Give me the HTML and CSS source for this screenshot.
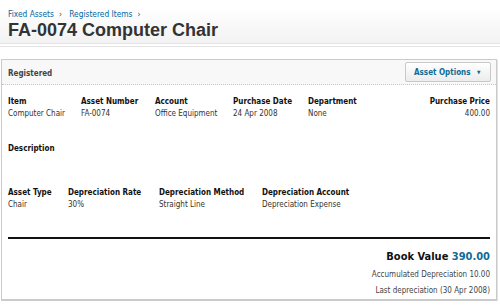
FILE: index.html
```html
<!DOCTYPE html>
<html lang="en">
<head>
    <meta charset="UTF-8">
    <title>FA-0074 Computer Chair</title>
    <link rel="stylesheet" href="styles.css">
</head>
<body>
    <div class="page-header">
        <div class="breadcrumb">
            <a href="#">Fixed Assets</a><span class="sep">&rsaquo;</span>
            <a href="#">Registered Items</a><span class="sep">&rsaquo;</span>
        </div>
        <h1>FA-0074 Computer Chair</h1>
    </div>

    <div class="panel">
        <div class="panel-head">
            <span class="status">Registered</span>
            <button class="options">Asset Options <span class="caret">&#9660;</span></button>
        </div>
        <div class="panel-body">
            <div class="fields row-one">
                <div class="field"><div class="label">Item</div><div class="value">Computer Chair</div></div>
                <div class="field"><div class="label">Asset Number</div><div class="value">FA-0074</div></div>
                <div class="field"><div class="label">Account</div><div class="value">Office Equipment</div></div>
                <div class="field"><div class="label">Purchase Date</div><div class="value">24 Apr 2008</div></div>
                <div class="field"><div class="label">Department</div><div class="value">None</div></div>
                <div class="field right"><div class="label">Purchase Price</div><div class="value">400.00</div></div>
            </div>

            <div class="description">
                <div class="label">Description</div>
            </div>

            <div class="fields row-two">
                <div class="field"><div class="label">Asset Type</div><div class="value">Chair</div></div>
                <div class="field"><div class="label">Depreciation Rate</div><div class="value">30%</div></div>
                <div class="field"><div class="label">Depreciation Method</div><div class="value">Straight Line</div></div>
                <div class="field"><div class="label">Depreciation Account</div><div class="value">Depreciation Expense</div></div>
            </div>

            <div class="totals">
                <div class="book-value">Book Value <span class="amount">390.00</span></div>
                <div class="note">Accumulated Depreciation 10.00</div>
                <div class="note">Last depreciation (30 Apr 2008)</div>
            </div>
        </div>
    </div>
</body>
</html>
```

FILE: styles.css
```css
body {
    margin: 0;
    padding: 0;
    background: #fff;
    font-family: "DejaVu Sans Condensed", "DejaVu Sans", sans-serif;
    font-size: 8px;
    color: #333;
}
.page-header {
    background: linear-gradient(#fff 8px, #f2f2f2);
    padding: 9px 8px 0;
    height: 34px;
    border-bottom: 1px solid #e2e2e2;
    box-shadow: 0 2px 0 #fff, 0 3px 0 #e4e4e4;
}
.breadcrumb {
    line-height: 10px;
    font-size: 8.3px;
}
.breadcrumb a {
    color: #0067a0;
    text-decoration: none;
}
.breadcrumb .sep {
    color: #444;
    margin: 0 5px;
}
h1 {
    margin: 1px 0 0;
    font-family: "Liberation Sans", Arial, sans-serif;
    font-size: 18px;
    line-height: 20px;
    color: #333;
}
.panel {
    margin: 15px 3px 0 1px;
    border: 1px solid #cbcbcb;
    border-bottom-width: 2px;
    box-shadow: 1px 1px 0 #e2e2e2;
    height: 239px;
}
.panel-head {
    display: flex;
    justify-content: space-between;
    align-items: center;
    height: 24px;
    padding: 0 5px 0 6px;
    background: #f8f8f8;
    border-bottom: 1px dotted #c8c8c8;
}
.status {
    font-weight: bold;
    color: #444;
    padding-top: 2px;
}
.options {
    font-family: inherit;
    font-size: 8px;
    font-weight: bold;
    color: #0f6c96;
    background: linear-gradient(#fff, #ececec);
    border: 1px solid #c9c9c9;
    border-radius: 2px;
    height: 20px;
    width: 86px;
    padding: 0 0 0 8px;
    text-align: left;
}
.caret {
    font-size: 5px;
    margin-left: 4px;
    vertical-align: 1px;
}
.panel-body {
    padding: 11px 6px 0 6px;
}
.fields {
    display: grid;
    line-height: 12px;
}
.row-one {
    grid-template-columns: 73px 74px 78px 75px 1fr auto;
}
.row-two {
    grid-template-columns: 60px 91px 103px auto;
    margin-top: 32px;
}
.label {
    font-weight: bold;
    color: #111;
}
.right {
    text-align: right;
}
.description {
    margin-top: 23px;
    line-height: 12px;
}
.totals {
    margin-top: 26px;
    border-top: 2px solid #111;
    padding-top: 11px;
    text-align: right;
    color: #444;
}
.book-value {
    font-size: 11px;
    font-weight: bold;
    color: #111;
    line-height: 14px;
    margin-bottom: 3px;
}
.amount {
    color: #0f6c96;
}
.note {
    line-height: 16px;
}
```
